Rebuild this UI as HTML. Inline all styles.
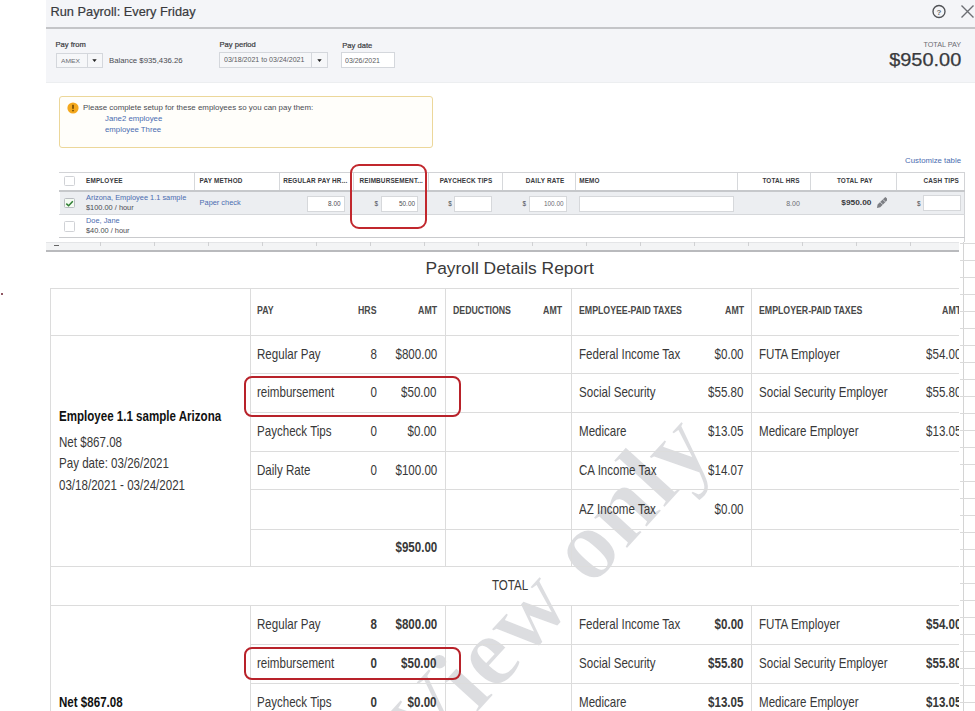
<!DOCTYPE html>
<html><head><meta charset="utf-8"><style>
html,body{margin:0;padding:0;background:#fff;}
body{width:975px;height:711px;position:relative;overflow:hidden;font-family:'Liberation Sans',sans-serif;}
.t{position:absolute;white-space:nowrap;line-height:1;}
.b{position:absolute;}
.clip{position:absolute;overflow:hidden;}
.wm{font-family:'Liberation Serif',serif;font-weight:700;-webkit-text-stroke:1.6px #fff;font-size:101px;color:#dcdde0;transform:translate(-50%,-50%) rotate(-47.6deg);}
</style></head><body>
<div class="b" style="left:46px;top:0px;width:929px;height:27px;background:#f4f5f8;"></div>
<div class="b" style="left:46px;top:27px;width:929px;height:1.6px;background:#c4c5c8;"></div>
<div class="b" style="left:46px;top:28.6px;width:929px;height:53.4px;background:#f4f5f8;"></div>
<div class="b" style="left:46px;top:82px;width:929px;height:1px;background:#eceef0;"></div>
<div class="t" style="top:6.16px;font-size:12.8px;font-weight:400;color:#393a3d;font-family:'Liberation Sans',sans-serif;left:50.50px;-webkit-text-stroke:0.2px #393a3d;">Run Payroll: Every Friday</div>
<svg class="b" style="left:931px;top:4px" width="16" height="16" viewBox="0 0 16 16"><circle cx="8" cy="7.5" r="6" fill="none" stroke="#505256" stroke-width="1.35"/><text x="8" y="10.5" font-family="Liberation Sans" font-weight="700" font-size="8" text-anchor="middle" fill="#6a6c70">?</text></svg>
<svg class="b" style="left:958px;top:3px" width="17" height="17" viewBox="0 0 17 17"><path d="M3.5 2.5 L15.5 14.5 M15.5 2.5 L3.5 14.5" stroke="#6c6e73" stroke-width="1.4" fill="none"/></svg>
<div class="t" style="top:40.57px;font-size:7.6px;font-weight:400;color:#393a3d;font-family:'Liberation Sans',sans-serif;left:55.50px;-webkit-text-stroke:0.2px #393a3d;">Pay from</div>
<div class="b" style="left:55.5px;top:52.5px;width:47px;height:15.5px;background:#f6f7f9;border:1px solid #d4d7dc;box-sizing:border-box;"></div>
<div class="b" style="left:86.5px;top:52.5px;width:1px;height:15.5px;background:#d4d7dc;"></div>
<div class="t" style="top:58.05px;font-size:6.2px;font-weight:400;color:#6b6c72;font-family:'Liberation Sans',sans-serif;left:61.00px;transform-origin:0 50%;transform:scaleX(1.08);">AMEX</div>
<svg class="b" style="left:92px;top:59px" width="5" height="4"><path d="M0.3 0.3 L4.7 0.3 L2.5 3Z" fill="#222"/></svg>
<div class="t" style="top:56.70px;font-size:7.8px;font-weight:400;color:#4b4c52;font-family:'Liberation Sans',sans-serif;left:109.00px;">Balance $935,436.26</div>
<div class="t" style="top:40.87px;font-size:7.6px;font-weight:400;color:#393a3d;font-family:'Liberation Sans',sans-serif;left:219.50px;-webkit-text-stroke:0.2px #393a3d;">Pay period</div>
<div class="b" style="left:218.5px;top:51.5px;width:109px;height:16px;background:#f6f7f9;border:1px solid #d4d7dc;box-sizing:border-box;"></div>
<div class="b" style="left:311px;top:51.5px;width:1px;height:16px;background:#d4d7dc;"></div>
<div class="t" style="top:57.17px;font-size:6.3px;font-weight:400;color:#5b5c62;font-family:'Liberation Sans',sans-serif;left:224.00px;transform-origin:0 50%;transform:scaleX(1.12);">03/18/2021 to 03/24/2021</div>
<svg class="b" style="left:317px;top:59px" width="5" height="4"><path d="M0.3 0.3 L4.7 0.3 L2.5 3Z" fill="#222"/></svg>
<div class="t" style="top:41.87px;font-size:7.6px;font-weight:400;color:#393a3d;font-family:'Liberation Sans',sans-serif;left:342.30px;-webkit-text-stroke:0.2px #393a3d;">Pay date</div>
<div class="b" style="left:341.3px;top:52.4px;width:54px;height:15.5px;background:#ffffff;border:1px solid #d4d7dc;box-sizing:border-box;"></div>
<div class="t" style="top:57.67px;font-size:6.3px;font-weight:400;color:#5b5c62;font-family:'Liberation Sans',sans-serif;left:344.50px;transform-origin:0 50%;transform:scaleX(1.11);">03/26/2021</div>
<div class="t" style="top:40.71px;font-size:7.2px;font-weight:400;color:#6b6c72;font-family:'Liberation Sans',sans-serif;right:14.00px;">TOTAL PAY</div>
<div class="t" style="top:51.69px;font-size:17.5px;font-weight:400;color:#393a3d;font-family:'Liberation Sans',sans-serif;right:14.00px;transform-origin:100% 50%;transform:scaleX(1.14);-webkit-text-stroke:0.25px #393a3d;">$950.00</div>
<div class="b" style="left:59px;top:95.5px;width:374px;height:52px;background:#fffefa;border:1px solid #ecd79a;border-radius:3px;box-sizing:border-box;"></div>
<svg class="b" style="left:66.5px;top:101.5px" width="12" height="12"><circle cx="6" cy="6" r="5.6" fill="#f4a81d"/><rect x="5.3" y="2.8" width="1.4" height="4" fill="#5a3a00"/><rect x="5.3" y="7.9" width="1.4" height="1.4" fill="#5a3a00"/></svg>
<div class="t" style="top:103.61px;font-size:7.9px;font-weight:400;color:#4b4c52;font-family:'Liberation Sans',sans-serif;left:83.00px;">Please complete setup for these employees so you can pay them:</div>
<div class="t" style="top:114.60px;font-size:7.8px;font-weight:400;color:#4a6cb0;font-family:'Liberation Sans',sans-serif;left:105.00px;">Jane2 employee</div>
<div class="t" style="top:125.70px;font-size:7.8px;font-weight:400;color:#4a6cb0;font-family:'Liberation Sans',sans-serif;left:105.00px;">employee Three</div>
<div class="t" style="top:157.40px;font-size:7.8px;font-weight:400;color:#4a6cb0;font-family:'Liberation Sans',sans-serif;right:14.00px;">Customize table</div>
<div class="b" style="left:58.5px;top:171.5px;width:906px;height:1px;background:#d2d3d6;"></div>
<div class="b" style="left:964px;top:171.5px;width:1px;height:70px;background:#d2d3d6;"></div>
<div class="b" style="left:58.5px;top:190px;width:906px;height:2px;background:#c6c8cb;"></div>
<div class="b" style="left:59.5px;top:192px;width:904.5px;height:22px;background:#eceef1;"></div>
<div class="b" style="left:58.5px;top:214px;width:906px;height:1px;background:#d6d8db;"></div>
<div class="b" style="left:58.5px;top:237px;width:906px;height:1px;background:#c9cacd;"></div>
<div class="b" style="left:193.5px;top:172.5px;width:1px;height:17.5px;background:#d6d8db;"></div>
<div class="b" style="left:278.7px;top:172.5px;width:1px;height:17.5px;background:#d6d8db;"></div>
<div class="b" style="left:352.6px;top:172.5px;width:1px;height:17.5px;background:#d6d8db;"></div>
<div class="b" style="left:428px;top:172.5px;width:1px;height:17.5px;background:#d6d8db;"></div>
<div class="b" style="left:501.5px;top:172.5px;width:1px;height:17.5px;background:#d6d8db;"></div>
<div class="b" style="left:575.4px;top:172.5px;width:1px;height:17.5px;background:#d6d8db;"></div>
<div class="b" style="left:736.5px;top:172.5px;width:1px;height:17.5px;background:#d6d8db;"></div>
<div class="b" style="left:810.4px;top:172.5px;width:1px;height:17.5px;background:#d6d8db;"></div>
<div class="b" style="left:896.3px;top:172.5px;width:1px;height:17.5px;background:#d6d8db;"></div>
<div class="t" style="top:178.28px;font-size:6.4px;font-weight:700;color:#393a3d;font-family:'Liberation Sans',sans-serif;left:86.00px;letter-spacing:0.15px;">EMPLOYEE</div>
<div class="t" style="top:178.28px;font-size:6.4px;font-weight:700;color:#393a3d;font-family:'Liberation Sans',sans-serif;left:199.60px;letter-spacing:0.15px;">PAY METHOD</div>
<div class="t" style="top:178.28px;font-size:6.4px;font-weight:700;color:#393a3d;font-family:'Liberation Sans',sans-serif;right:627.60px;letter-spacing:0.15px;">REGULAR PAY HR...</div>
<div class="t" style="top:178.28px;font-size:6.4px;font-weight:700;color:#393a3d;font-family:'Liberation Sans',sans-serif;right:552.00px;letter-spacing:0.15px;">REIMBURSEMENT...</div>
<div class="t" style="top:178.28px;font-size:6.4px;font-weight:700;color:#393a3d;font-family:'Liberation Sans',sans-serif;left:439.70px;letter-spacing:0.15px;">PAYCHECK TIPS</div>
<div class="t" style="top:178.28px;font-size:6.4px;font-weight:700;color:#393a3d;font-family:'Liberation Sans',sans-serif;right:410.60px;letter-spacing:0.15px;">DAILY RATE</div>
<div class="t" style="top:178.28px;font-size:6.4px;font-weight:700;color:#393a3d;font-family:'Liberation Sans',sans-serif;left:579.20px;letter-spacing:0.15px;">MEMO</div>
<div class="t" style="top:178.28px;font-size:6.4px;font-weight:700;color:#393a3d;font-family:'Liberation Sans',sans-serif;right:175.40px;letter-spacing:0.15px;">TOTAL HRS</div>
<div class="t" style="top:178.28px;font-size:6.4px;font-weight:700;color:#393a3d;font-family:'Liberation Sans',sans-serif;right:102.30px;letter-spacing:0.15px;">TOTAL PAY</div>
<div class="t" style="top:178.28px;font-size:6.4px;font-weight:700;color:#393a3d;font-family:'Liberation Sans',sans-serif;right:16.00px;letter-spacing:0.15px;">CASH TIPS</div>
<div class="b" style="left:63.5px;top:175.5px;width:11px;height:10.5px;background:#fff;border:1px solid #d0d2d6;border-radius:1.5px;box-sizing:border-box;"></div>
<div class="b" style="left:63.5px;top:197.5px;width:11px;height:10.5px;background:#f4fbf2;border:1px solid #b9bcc1;border-radius:1.5px;box-sizing:border-box;"></div>
<svg class="b" style="left:63.5px;top:197.5px" width="11" height="11"><path d="M2.3 5.6 L4.6 7.8 L8.8 3.2" stroke="#2e7d32" stroke-width="1.5" fill="none"/></svg>
<div class="b" style="left:63.5px;top:220.5px;width:11px;height:11px;background:#fff;border:1px solid #d0d2d6;border-radius:1.5px;box-sizing:border-box;"></div>
<div class="t" style="top:194.24px;font-size:7.4px;font-weight:400;color:#4a6cb0;font-family:'Liberation Sans',sans-serif;left:86.00px;">Arizona, Employee 1.1 sample</div>
<div class="t" style="top:203.74px;font-size:7.4px;font-weight:400;color:#4b4c52;font-family:'Liberation Sans',sans-serif;left:86.00px;">$100.00 / hour</div>
<div class="t" style="top:198.74px;font-size:7.4px;font-weight:400;color:#4a6cb0;font-family:'Liberation Sans',sans-serif;left:199.60px;">Paper check</div>
<div class="t" style="top:217.04px;font-size:7.4px;font-weight:400;color:#4a6cb0;font-family:'Liberation Sans',sans-serif;left:86.00px;">Doe, Jane</div>
<div class="t" style="top:226.74px;font-size:7.4px;font-weight:400;color:#4b4c52;font-family:'Liberation Sans',sans-serif;left:86.00px;">$40.00 / hour</div>
<div class="b" style="left:307px;top:196px;width:37.5px;height:15.5px;background:#fff;border:1px solid #d6d8db;box-sizing:border-box;"></div>
<div class="t" style="top:200.88px;font-size:6.4px;font-weight:400;color:#4b4c52;font-family:'Liberation Sans',sans-serif;right:634.50px;">8.00</div>
<div class="t" style="top:200.58px;font-size:6.4px;font-weight:400;color:#4b4c52;font-family:'Liberation Sans',sans-serif;left:374.50px;">$</div>
<div class="b" style="left:380.8px;top:196px;width:37.7px;height:15.5px;background:#fff;border:1px solid #d6d8db;box-sizing:border-box;"></div>
<div class="t" style="top:200.88px;font-size:6.4px;font-weight:400;color:#4b4c52;font-family:'Liberation Sans',sans-serif;right:560.00px;">50.00</div>
<div class="t" style="top:200.58px;font-size:6.4px;font-weight:400;color:#4b4c52;font-family:'Liberation Sans',sans-serif;left:448.30px;">$</div>
<div class="b" style="left:454.4px;top:196px;width:38px;height:15.5px;background:#fff;border:1px solid #d6d8db;box-sizing:border-box;"></div>
<div class="t" style="top:200.58px;font-size:6.4px;font-weight:400;color:#4b4c52;font-family:'Liberation Sans',sans-serif;left:522.50px;">$</div>
<div class="b" style="left:528.5px;top:195.5px;width:38.5px;height:16px;background:#fff;border:1px solid #d6d8db;box-sizing:border-box;"></div>
<div class="t" style="top:200.88px;font-size:6.4px;font-weight:400;color:#6b6c72;font-family:'Liberation Sans',sans-serif;right:411.50px;">100.00</div>
<div class="b" style="left:579px;top:195.5px;width:155px;height:16px;background:#fff;border:1px solid #d6d8db;box-sizing:border-box;"></div>
<div class="t" style="top:200.37px;font-size:7.0px;font-weight:400;color:#6b6c72;font-family:'Liberation Sans',sans-serif;right:175.20px;">8.00</div>
<div class="t" style="top:199.27px;font-size:7.6px;font-weight:700;color:#393a3d;font-family:'Liberation Sans',sans-serif;right:103.80px;transform-origin:100% 50%;transform:scaleX(1.1);">$950.00</div>
<svg class="b" style="left:873.5px;top:195px" width="13" height="13"><g transform="translate(1.6,11.6) rotate(-45)"><path d="M0 1.9 L2.8 0 L13 0 Q13.8 0 13.8 0.8 L13.8 3 Q13.8 3.8 13 3.8 L2.8 3.8 Z" fill="#7d7f84"/><path d="M10.2 0 V3.8 M6.5 0 V3.8" stroke="#eceef1" stroke-width="0.7"/></g></svg>
<div class="t" style="top:200.58px;font-size:6.4px;font-weight:400;color:#4b4c52;font-family:'Liberation Sans',sans-serif;left:917.00px;">$</div>
<div class="b" style="left:923px;top:195px;width:38px;height:16px;background:#fff;border:1px solid #d6d8db;box-sizing:border-box;"></div>
<div class="b" style="left:349.5px;top:164px;width:77.5px;height:64.5px;border:2px solid #c1272d;border-radius:9px;box-sizing:border-box;"></div>
<div class="b" style="left:46px;top:242px;width:913px;height:1px;background:#e4e5e7;"></div>
<div class="b" style="left:46px;top:243px;width:913px;height:7px;background:#f3f4f5;"></div>
<div class="b" style="left:46px;top:249.5px;width:913px;height:2px;background:#b9babd;"></div>
<div class="b" style="left:99.5px;top:242px;width:1px;height:4px;background:#d0d1d3;"></div>
<div class="b" style="left:153.5px;top:242px;width:1px;height:4px;background:#d0d1d3;"></div>
<div class="b" style="left:207.5px;top:242px;width:1px;height:4px;background:#d0d1d3;"></div>
<div class="b" style="left:261.5px;top:242px;width:1px;height:4px;background:#d0d1d3;"></div>
<div class="b" style="left:315.5px;top:242px;width:1px;height:4px;background:#d0d1d3;"></div>
<div class="b" style="left:369.5px;top:242px;width:1px;height:4px;background:#d0d1d3;"></div>
<div class="b" style="left:423.5px;top:242px;width:1px;height:4px;background:#d0d1d3;"></div>
<div class="b" style="left:477.5px;top:242px;width:1px;height:4px;background:#d0d1d3;"></div>
<div class="b" style="left:531.5px;top:242px;width:1px;height:4px;background:#d0d1d3;"></div>
<div class="b" style="left:585.5px;top:242px;width:1px;height:4px;background:#d0d1d3;"></div>
<div class="b" style="left:639.5px;top:242px;width:1px;height:4px;background:#d0d1d3;"></div>
<div class="b" style="left:693.5px;top:242px;width:1px;height:4px;background:#d0d1d3;"></div>
<div class="b" style="left:747.5px;top:242px;width:1px;height:4px;background:#d0d1d3;"></div>
<div class="b" style="left:801.5px;top:242px;width:1px;height:4px;background:#d0d1d3;"></div>
<div class="b" style="left:855.5px;top:242px;width:1px;height:4px;background:#d0d1d3;"></div>
<div class="b" style="left:909.5px;top:242px;width:1px;height:4px;background:#d0d1d3;"></div>
<div class="b" style="left:54px;top:244.5px;width:5px;height:1px;background:#666;"></div>
<div class="b" style="left:0.5px;top:292.5px;width:2.5px;height:2px;background:#6b2030;border-radius:1px;"></div>
<div class="clip" style="left:0;top:252px;width:975px;height:459px;">
<div class="t wm" style="left:547.5px;top:333.7px;">View only</div>
<div class="t" style="top:8.07px;font-size:17.4px;font-weight:400;color:#3a3a3a;font-family:'Liberation Sans',sans-serif;left:509.70px;transform:translateX(-50%) scaleX(1.0);">Payroll Details Report</div>
<div class="b" style="left:49.5px;top:35.5px;width:950.5px;height:1px;background:#dcdcdc;"></div>
<div class="b" style="left:49.5px;top:82.5px;width:950.5px;height:1px;background:#dcdcdc;"></div>
<div class="b" style="left:249.5px;top:121.19999999999999px;width:750.5px;height:1px;background:#dcdcdc;"></div>
<div class="b" style="left:249.5px;top:159.5px;width:750.5px;height:1px;background:#dcdcdc;"></div>
<div class="b" style="left:249.5px;top:198.5px;width:750.5px;height:1px;background:#dcdcdc;"></div>
<div class="b" style="left:249.5px;top:237.39999999999998px;width:750.5px;height:1px;background:#dcdcdc;"></div>
<div class="b" style="left:249.5px;top:276.5px;width:750.5px;height:1px;background:#dcdcdc;"></div>
<div class="b" style="left:49.5px;top:314.4px;width:950.5px;height:1px;background:#dcdcdc;"></div>
<div class="b" style="left:49.5px;top:353.20000000000005px;width:950.5px;height:1px;background:#dcdcdc;"></div>
<div class="b" style="left:249.5px;top:392.0px;width:750.5px;height:1px;background:#dcdcdc;"></div>
<div class="b" style="left:249.5px;top:430.79999999999995px;width:750.5px;height:1px;background:#dcdcdc;"></div>
<div class="b" style="left:49.5px;top:35.5px;width:1px;height:423.5px;background:#dcdcdc;"></div>
<div class="b" style="left:249.5px;top:35.5px;width:1px;height:278.9px;background:#dcdcdc;"></div>
<div class="b" style="left:249.5px;top:353.20000000000005px;width:1px;height:105.79999999999995px;background:#dcdcdc;"></div>
<div class="b" style="left:444.5px;top:35.5px;width:1px;height:278.9px;background:#dcdcdc;"></div>
<div class="b" style="left:444.5px;top:353.20000000000005px;width:1px;height:105.79999999999995px;background:#dcdcdc;"></div>
<div class="b" style="left:570.5px;top:35.5px;width:1px;height:278.9px;background:#dcdcdc;"></div>
<div class="b" style="left:570.5px;top:353.20000000000005px;width:1px;height:105.79999999999995px;background:#dcdcdc;"></div>
<div class="b" style="left:751px;top:35.5px;width:1px;height:278.9px;background:#dcdcdc;"></div>
<div class="b" style="left:751px;top:353.20000000000005px;width:1px;height:105.79999999999995px;background:#dcdcdc;"></div>
<div class="t" style="top:54.02px;font-size:10.2px;font-weight:700;color:#484848;font-family:'Liberation Sans',sans-serif;left:257.20px;transform-origin:0 50%;transform:scaleX(0.86);">PAY</div>
<div class="t" style="top:54.02px;font-size:10.2px;font-weight:700;color:#484848;font-family:'Liberation Sans',sans-serif;right:598.20px;transform-origin:100% 50%;transform:scaleX(0.86);">HRS</div>
<div class="t" style="top:54.02px;font-size:10.2px;font-weight:700;color:#484848;font-family:'Liberation Sans',sans-serif;right:538.20px;transform-origin:100% 50%;transform:scaleX(0.86);">AMT</div>
<div class="t" style="top:54.02px;font-size:10.2px;font-weight:700;color:#484848;font-family:'Liberation Sans',sans-serif;left:453.20px;transform-origin:0 50%;transform:scaleX(0.86);">DEDUCTIONS</div>
<div class="t" style="top:54.02px;font-size:10.2px;font-weight:700;color:#484848;font-family:'Liberation Sans',sans-serif;right:412.70px;transform-origin:100% 50%;transform:scaleX(0.86);">AMT</div>
<div class="t" style="top:54.02px;font-size:10.2px;font-weight:700;color:#484848;font-family:'Liberation Sans',sans-serif;left:578.90px;transform-origin:0 50%;transform:scaleX(0.86);">EMPLOYEE-PAID TAXES</div>
<div class="t" style="top:54.02px;font-size:10.2px;font-weight:700;color:#484848;font-family:'Liberation Sans',sans-serif;right:231.30px;transform-origin:100% 50%;transform:scaleX(0.86);">AMT</div>
<div class="t" style="top:54.02px;font-size:10.2px;font-weight:700;color:#484848;font-family:'Liberation Sans',sans-serif;left:759.30px;transform-origin:0 50%;transform:scaleX(0.86);">EMPLOYER-PAID TAXES</div>
<div class="t" style="top:54.02px;font-size:10.2px;font-weight:700;color:#484848;font-family:'Liberation Sans',sans-serif;right:13.50px;transform-origin:100% 50%;transform:scaleX(0.86);">AMT</div>
<div class="t" style="top:94.56px;font-size:14.2px;font-weight:400;color:#383838;font-family:'Liberation Sans',sans-serif;left:257.20px;transform-origin:0 50%;transform:scaleX(0.815);">Regular Pay</div>
<div class="t" style="top:94.56px;font-size:14.2px;font-weight:400;color:#383838;font-family:'Liberation Sans',sans-serif;right:598.20px;transform-origin:100% 50%;transform:scaleX(0.815);">8</div>
<div class="t" style="top:94.56px;font-size:14.2px;font-weight:400;color:#383838;font-family:'Liberation Sans',sans-serif;right:538.20px;transform-origin:100% 50%;transform:scaleX(0.815);">$800.00</div>
<div class="t" style="top:94.56px;font-size:14.2px;font-weight:400;color:#383838;font-family:'Liberation Sans',sans-serif;left:578.90px;transform-origin:0 50%;transform:scaleX(0.815);">Federal Income Tax</div>
<div class="t" style="top:94.56px;font-size:14.2px;font-weight:400;color:#383838;font-family:'Liberation Sans',sans-serif;right:231.30px;transform-origin:100% 50%;transform:scaleX(0.815);">$0.00</div>
<div class="t" style="top:94.56px;font-size:14.2px;font-weight:400;color:#383838;font-family:'Liberation Sans',sans-serif;left:759.30px;transform-origin:0 50%;transform:scaleX(0.815);">FUTA Employer</div>
<div class="t" style="top:94.56px;font-size:14.2px;font-weight:400;color:#383838;font-family:'Liberation Sans',sans-serif;right:13.50px;transform-origin:100% 50%;transform:scaleX(0.815);">$54.00</div>
<div class="t" style="top:133.06px;font-size:14.2px;font-weight:400;color:#383838;font-family:'Liberation Sans',sans-serif;left:257.20px;transform-origin:0 50%;transform:scaleX(0.815);">reimbursement</div>
<div class="t" style="top:133.06px;font-size:14.2px;font-weight:400;color:#383838;font-family:'Liberation Sans',sans-serif;right:598.20px;transform-origin:100% 50%;transform:scaleX(0.815);">0</div>
<div class="t" style="top:133.06px;font-size:14.2px;font-weight:400;color:#383838;font-family:'Liberation Sans',sans-serif;right:538.20px;transform-origin:100% 50%;transform:scaleX(0.815);">$50.00</div>
<div class="t" style="top:133.06px;font-size:14.2px;font-weight:400;color:#383838;font-family:'Liberation Sans',sans-serif;left:578.90px;transform-origin:0 50%;transform:scaleX(0.815);">Social Security</div>
<div class="t" style="top:133.06px;font-size:14.2px;font-weight:400;color:#383838;font-family:'Liberation Sans',sans-serif;right:231.30px;transform-origin:100% 50%;transform:scaleX(0.815);">$55.80</div>
<div class="t" style="top:133.06px;font-size:14.2px;font-weight:400;color:#383838;font-family:'Liberation Sans',sans-serif;left:759.30px;transform-origin:0 50%;transform:scaleX(0.815);">Social Security Employer</div>
<div class="t" style="top:133.06px;font-size:14.2px;font-weight:400;color:#383838;font-family:'Liberation Sans',sans-serif;right:13.50px;transform-origin:100% 50%;transform:scaleX(0.815);">$55.80</div>
<div class="t" style="top:172.06px;font-size:14.2px;font-weight:400;color:#383838;font-family:'Liberation Sans',sans-serif;left:257.20px;transform-origin:0 50%;transform:scaleX(0.815);">Paycheck Tips</div>
<div class="t" style="top:172.06px;font-size:14.2px;font-weight:400;color:#383838;font-family:'Liberation Sans',sans-serif;right:598.20px;transform-origin:100% 50%;transform:scaleX(0.815);">0</div>
<div class="t" style="top:172.06px;font-size:14.2px;font-weight:400;color:#383838;font-family:'Liberation Sans',sans-serif;right:538.20px;transform-origin:100% 50%;transform:scaleX(0.815);">$0.00</div>
<div class="t" style="top:172.06px;font-size:14.2px;font-weight:400;color:#383838;font-family:'Liberation Sans',sans-serif;left:578.90px;transform-origin:0 50%;transform:scaleX(0.815);">Medicare</div>
<div class="t" style="top:172.06px;font-size:14.2px;font-weight:400;color:#383838;font-family:'Liberation Sans',sans-serif;right:231.30px;transform-origin:100% 50%;transform:scaleX(0.815);">$13.05</div>
<div class="t" style="top:172.06px;font-size:14.2px;font-weight:400;color:#383838;font-family:'Liberation Sans',sans-serif;left:759.30px;transform-origin:0 50%;transform:scaleX(0.815);">Medicare Employer</div>
<div class="t" style="top:172.06px;font-size:14.2px;font-weight:400;color:#383838;font-family:'Liberation Sans',sans-serif;right:13.50px;transform-origin:100% 50%;transform:scaleX(0.815);">$13.05</div>
<div class="t" style="top:210.86px;font-size:14.2px;font-weight:400;color:#383838;font-family:'Liberation Sans',sans-serif;left:257.20px;transform-origin:0 50%;transform:scaleX(0.815);">Daily Rate</div>
<div class="t" style="top:210.86px;font-size:14.2px;font-weight:400;color:#383838;font-family:'Liberation Sans',sans-serif;right:598.20px;transform-origin:100% 50%;transform:scaleX(0.815);">0</div>
<div class="t" style="top:210.86px;font-size:14.2px;font-weight:400;color:#383838;font-family:'Liberation Sans',sans-serif;right:538.20px;transform-origin:100% 50%;transform:scaleX(0.815);">$100.00</div>
<div class="t" style="top:210.86px;font-size:14.2px;font-weight:400;color:#383838;font-family:'Liberation Sans',sans-serif;left:578.90px;transform-origin:0 50%;transform:scaleX(0.815);">CA Income Tax</div>
<div class="t" style="top:210.86px;font-size:14.2px;font-weight:400;color:#383838;font-family:'Liberation Sans',sans-serif;right:231.30px;transform-origin:100% 50%;transform:scaleX(0.815);">$14.07</div>
<div class="t" style="top:249.56px;font-size:14.2px;font-weight:400;color:#383838;font-family:'Liberation Sans',sans-serif;left:578.90px;transform-origin:0 50%;transform:scaleX(0.815);">AZ Income Tax</div>
<div class="t" style="top:249.56px;font-size:14.2px;font-weight:400;color:#383838;font-family:'Liberation Sans',sans-serif;right:231.30px;transform-origin:100% 50%;transform:scaleX(0.815);">$0.00</div>
<div class="t" style="top:288.06px;font-size:14.2px;font-weight:700;color:#383838;font-family:'Liberation Sans',sans-serif;right:538.20px;transform-origin:100% 50%;transform:scaleX(0.815);">$950.00</div>
<div class="t" style="top:326.26px;font-size:14.2px;font-weight:400;color:#383838;font-family:'Liberation Sans',sans-serif;left:509.50px;transform:translateX(-50%) scaleX(0.815);">TOTAL</div>
<div class="t" style="top:365.36px;font-size:14.2px;font-weight:400;color:#383838;font-family:'Liberation Sans',sans-serif;left:257.20px;transform-origin:0 50%;transform:scaleX(0.815);">Regular Pay</div>
<div class="t" style="top:365.36px;font-size:14.2px;font-weight:700;color:#383838;font-family:'Liberation Sans',sans-serif;right:598.20px;transform-origin:100% 50%;transform:scaleX(0.815);">8</div>
<div class="t" style="top:365.36px;font-size:14.2px;font-weight:700;color:#383838;font-family:'Liberation Sans',sans-serif;right:538.20px;transform-origin:100% 50%;transform:scaleX(0.815);">$800.00</div>
<div class="t" style="top:365.36px;font-size:14.2px;font-weight:400;color:#383838;font-family:'Liberation Sans',sans-serif;left:578.90px;transform-origin:0 50%;transform:scaleX(0.815);">Federal Income Tax</div>
<div class="t" style="top:365.36px;font-size:14.2px;font-weight:700;color:#383838;font-family:'Liberation Sans',sans-serif;right:231.30px;transform-origin:100% 50%;transform:scaleX(0.815);">$0.00</div>
<div class="t" style="top:365.36px;font-size:14.2px;font-weight:400;color:#383838;font-family:'Liberation Sans',sans-serif;left:759.30px;transform-origin:0 50%;transform:scaleX(0.815);">FUTA Employer</div>
<div class="t" style="top:365.36px;font-size:14.2px;font-weight:700;color:#383838;font-family:'Liberation Sans',sans-serif;right:13.50px;transform-origin:100% 50%;transform:scaleX(0.815);">$54.00</div>
<div class="t" style="top:404.06px;font-size:14.2px;font-weight:400;color:#383838;font-family:'Liberation Sans',sans-serif;left:257.20px;transform-origin:0 50%;transform:scaleX(0.815);">reimbursement</div>
<div class="t" style="top:404.06px;font-size:14.2px;font-weight:700;color:#383838;font-family:'Liberation Sans',sans-serif;right:598.20px;transform-origin:100% 50%;transform:scaleX(0.815);">0</div>
<div class="t" style="top:404.06px;font-size:14.2px;font-weight:700;color:#383838;font-family:'Liberation Sans',sans-serif;right:538.20px;transform-origin:100% 50%;transform:scaleX(0.815);">$50.00</div>
<div class="t" style="top:404.06px;font-size:14.2px;font-weight:400;color:#383838;font-family:'Liberation Sans',sans-serif;left:578.90px;transform-origin:0 50%;transform:scaleX(0.815);">Social Security</div>
<div class="t" style="top:404.06px;font-size:14.2px;font-weight:700;color:#383838;font-family:'Liberation Sans',sans-serif;right:231.30px;transform-origin:100% 50%;transform:scaleX(0.815);">$55.80</div>
<div class="t" style="top:404.06px;font-size:14.2px;font-weight:400;color:#383838;font-family:'Liberation Sans',sans-serif;left:759.30px;transform-origin:0 50%;transform:scaleX(0.815);">Social Security Employer</div>
<div class="t" style="top:404.06px;font-size:14.2px;font-weight:700;color:#383838;font-family:'Liberation Sans',sans-serif;right:13.50px;transform-origin:100% 50%;transform:scaleX(0.815);">$55.80</div>
<div class="t" style="top:442.56px;font-size:14.2px;font-weight:400;color:#383838;font-family:'Liberation Sans',sans-serif;left:257.20px;transform-origin:0 50%;transform:scaleX(0.815);">Paycheck Tips</div>
<div class="t" style="top:442.56px;font-size:14.2px;font-weight:700;color:#383838;font-family:'Liberation Sans',sans-serif;right:598.20px;transform-origin:100% 50%;transform:scaleX(0.815);">0</div>
<div class="t" style="top:442.56px;font-size:14.2px;font-weight:700;color:#383838;font-family:'Liberation Sans',sans-serif;right:538.20px;transform-origin:100% 50%;transform:scaleX(0.815);">$0.00</div>
<div class="t" style="top:442.56px;font-size:14.2px;font-weight:400;color:#383838;font-family:'Liberation Sans',sans-serif;left:578.90px;transform-origin:0 50%;transform:scaleX(0.815);">Medicare</div>
<div class="t" style="top:442.56px;font-size:14.2px;font-weight:700;color:#383838;font-family:'Liberation Sans',sans-serif;right:231.30px;transform-origin:100% 50%;transform:scaleX(0.815);">$13.05</div>
<div class="t" style="top:442.56px;font-size:14.2px;font-weight:400;color:#383838;font-family:'Liberation Sans',sans-serif;left:759.30px;transform-origin:0 50%;transform:scaleX(0.815);">Medicare Employer</div>
<div class="t" style="top:442.56px;font-size:14.2px;font-weight:700;color:#383838;font-family:'Liberation Sans',sans-serif;right:13.50px;transform-origin:100% 50%;transform:scaleX(0.815);">$13.05</div>
<div class="t" style="top:156.56px;font-size:14.2px;font-weight:700;color:#111;font-family:'Liberation Sans',sans-serif;left:58.50px;transform-origin:0 50%;transform:scaleX(0.815);">Employee 1.1 sample Arizona</div>
<div class="t" style="top:182.56px;font-size:14.2px;font-weight:400;color:#383838;font-family:'Liberation Sans',sans-serif;left:58.50px;transform-origin:0 50%;transform:scaleX(0.815);">Net $867.08</div>
<div class="t" style="top:203.86px;font-size:14.2px;font-weight:400;color:#383838;font-family:'Liberation Sans',sans-serif;left:58.50px;transform-origin:0 50%;transform:scaleX(0.815);">Pay date: 03/26/2021</div>
<div class="t" style="top:225.66px;font-size:14.2px;font-weight:400;color:#383838;font-family:'Liberation Sans',sans-serif;left:58.50px;transform-origin:0 50%;transform:scaleX(0.815);">03/18/2021 - 03/24/2021</div>
<div class="t" style="top:442.56px;font-size:14.2px;font-weight:700;color:#111;font-family:'Liberation Sans',sans-serif;left:58.50px;transform-origin:0 50%;transform:scaleX(0.815);">Net $867.08</div>
<div class="b" style="left:243.6px;top:124px;width:217.5px;height:41.2px;border:2px solid #b8222a;border-radius:8px;box-sizing:border-box;"></div>
<div class="b" style="left:243.6px;top:395.29999999999995px;width:217.5px;height:32.5px;border:2px solid #b8222a;border-radius:8px;box-sizing:border-box;"></div>
</div>
<div class="b" style="left:959px;top:242px;width:16px;height:469px;background:#fff;"></div>
<div class="b" style="left:963.3px;top:242px;width:1px;height:469px;background:#d4d4d4;"></div>
<div class="b" style="left:959.5px;top:242.5px;width:15.5px;height:1px;background:#dadada;"></div>
<div class="b" style="left:959.5px;top:259.5px;width:15.5px;height:1px;background:#dadada;"></div>
<div class="b" style="left:959.5px;top:276.5px;width:15.5px;height:1px;background:#dadada;"></div>
<div class="b" style="left:959.5px;top:293.5px;width:15.5px;height:1px;background:#dadada;"></div>
<div class="b" style="left:959.5px;top:310.5px;width:15.5px;height:1px;background:#dadada;"></div>
<div class="b" style="left:959.5px;top:327.5px;width:15.5px;height:1px;background:#dadada;"></div>
<div class="b" style="left:959.5px;top:344.5px;width:15.5px;height:1px;background:#dadada;"></div>
<div class="b" style="left:959.5px;top:361.5px;width:15.5px;height:1px;background:#dadada;"></div>
<div class="b" style="left:959.5px;top:378.5px;width:15.5px;height:1px;background:#dadada;"></div>
<div class="b" style="left:959.5px;top:395.5px;width:15.5px;height:1px;background:#dadada;"></div>
<div class="b" style="left:959.5px;top:412.5px;width:15.5px;height:1px;background:#dadada;"></div>
<div class="b" style="left:959.5px;top:429.5px;width:15.5px;height:1px;background:#dadada;"></div>
<div class="b" style="left:959.5px;top:446.5px;width:15.5px;height:1px;background:#dadada;"></div>
<div class="b" style="left:959.5px;top:463.5px;width:15.5px;height:1px;background:#dadada;"></div>
<div class="b" style="left:959.5px;top:480.5px;width:15.5px;height:1px;background:#dadada;"></div>
<div class="b" style="left:959.5px;top:497.5px;width:15.5px;height:1px;background:#dadada;"></div>
<div class="b" style="left:959.5px;top:514.5px;width:15.5px;height:1px;background:#dadada;"></div>
<div class="b" style="left:959.5px;top:531.5px;width:15.5px;height:1px;background:#dadada;"></div>
<div class="b" style="left:959.5px;top:548.5px;width:15.5px;height:1px;background:#dadada;"></div>
<div class="b" style="left:959.5px;top:565.5px;width:15.5px;height:1px;background:#dadada;"></div>
<div class="b" style="left:959.5px;top:582.5px;width:15.5px;height:1px;background:#dadada;"></div>
<div class="b" style="left:959.5px;top:599.5px;width:15.5px;height:1px;background:#dadada;"></div>
<div class="b" style="left:959.5px;top:616.5px;width:15.5px;height:1px;background:#dadada;"></div>
<div class="b" style="left:959.5px;top:633.5px;width:15.5px;height:1px;background:#dadada;"></div>
<div class="b" style="left:959.5px;top:650.5px;width:15.5px;height:1px;background:#dadada;"></div>
<div class="b" style="left:959.5px;top:667.5px;width:15.5px;height:1px;background:#dadada;"></div>
<div class="b" style="left:959.5px;top:684.5px;width:15.5px;height:1px;background:#dadada;"></div>
<div class="b" style="left:959.5px;top:701.5px;width:15.5px;height:1px;background:#dadada;"></div>
</body></html>
